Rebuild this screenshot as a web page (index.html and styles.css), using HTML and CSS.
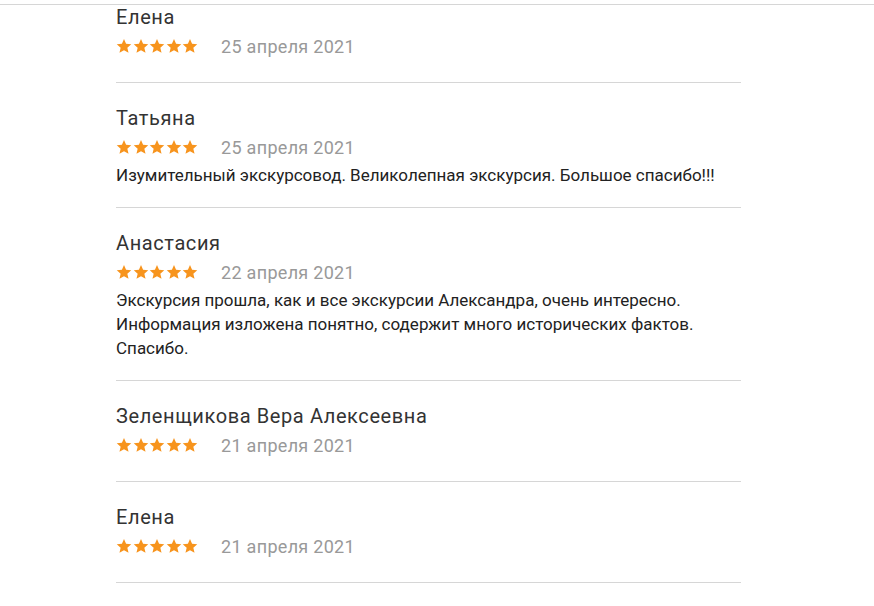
FILE: index.html
```html
<!DOCTYPE html>
<html lang="ru">
<head>
    <meta charset="UTF-8">
    <meta name="viewport" content="width=device-width, initial-scale=1.0">
    <title>Отзывы</title>
    <link rel="stylesheet" href="styles.css">
</head>
<body>

    <div class="top-line"></div>

    <div class="reviews">
        <div class="review">
            <div class="review-name">Елена</div>
            <div class="review-meta">
                <span class="stars">
                    <svg viewBox="0 0 24 24"><path d="M12 1.5l3.1 7.2 7.8.7-5.9 5.2 1.8 7.7L12 18.2l-6.8 4.1 1.8-7.7-5.9-5.2 7.8-.7z"/></svg>
                    <svg viewBox="0 0 24 24"><path d="M12 1.5l3.1 7.2 7.8.7-5.9 5.2 1.8 7.7L12 18.2l-6.8 4.1 1.8-7.7-5.9-5.2 7.8-.7z"/></svg>
                    <svg viewBox="0 0 24 24"><path d="M12 1.5l3.1 7.2 7.8.7-5.9 5.2 1.8 7.7L12 18.2l-6.8 4.1 1.8-7.7-5.9-5.2 7.8-.7z"/></svg>
                    <svg viewBox="0 0 24 24"><path d="M12 1.5l3.1 7.2 7.8.7-5.9 5.2 1.8 7.7L12 18.2l-6.8 4.1 1.8-7.7-5.9-5.2 7.8-.7z"/></svg>
                    <svg viewBox="0 0 24 24"><path d="M12 1.5l3.1 7.2 7.8.7-5.9 5.2 1.8 7.7L12 18.2l-6.8 4.1 1.8-7.7-5.9-5.2 7.8-.7z"/></svg>
                </span>
                <span class="review-date">25 апреля 2021</span>
            </div>
        </div>

        <div class="review">
            <div class="review-name">Татьяна</div>
            <div class="review-meta">
                <span class="stars">
                    <svg viewBox="0 0 24 24"><path d="M12 1.5l3.1 7.2 7.8.7-5.9 5.2 1.8 7.7L12 18.2l-6.8 4.1 1.8-7.7-5.9-5.2 7.8-.7z"/></svg>
                    <svg viewBox="0 0 24 24"><path d="M12 1.5l3.1 7.2 7.8.7-5.9 5.2 1.8 7.7L12 18.2l-6.8 4.1 1.8-7.7-5.9-5.2 7.8-.7z"/></svg>
                    <svg viewBox="0 0 24 24"><path d="M12 1.5l3.1 7.2 7.8.7-5.9 5.2 1.8 7.7L12 18.2l-6.8 4.1 1.8-7.7-5.9-5.2 7.8-.7z"/></svg>
                    <svg viewBox="0 0 24 24"><path d="M12 1.5l3.1 7.2 7.8.7-5.9 5.2 1.8 7.7L12 18.2l-6.8 4.1 1.8-7.7-5.9-5.2 7.8-.7z"/></svg>
                    <svg viewBox="0 0 24 24"><path d="M12 1.5l3.1 7.2 7.8.7-5.9 5.2 1.8 7.7L12 18.2l-6.8 4.1 1.8-7.7-5.9-5.2 7.8-.7z"/></svg>
                </span>
                <span class="review-date">25 апреля 2021</span>
            </div>
            <p class="review-text">Изумительный экскурсовод. Великолепная экскурсия. Большое спасибо!!!</p>
        </div>

        <div class="review">
            <div class="review-name">Анастасия</div>
            <div class="review-meta">
                <span class="stars">
                    <svg viewBox="0 0 24 24"><path d="M12 1.5l3.1 7.2 7.8.7-5.9 5.2 1.8 7.7L12 18.2l-6.8 4.1 1.8-7.7-5.9-5.2 7.8-.7z"/></svg>
                    <svg viewBox="0 0 24 24"><path d="M12 1.5l3.1 7.2 7.8.7-5.9 5.2 1.8 7.7L12 18.2l-6.8 4.1 1.8-7.7-5.9-5.2 7.8-.7z"/></svg>
                    <svg viewBox="0 0 24 24"><path d="M12 1.5l3.1 7.2 7.8.7-5.9 5.2 1.8 7.7L12 18.2l-6.8 4.1 1.8-7.7-5.9-5.2 7.8-.7z"/></svg>
                    <svg viewBox="0 0 24 24"><path d="M12 1.5l3.1 7.2 7.8.7-5.9 5.2 1.8 7.7L12 18.2l-6.8 4.1 1.8-7.7-5.9-5.2 7.8-.7z"/></svg>
                    <svg viewBox="0 0 24 24"><path d="M12 1.5l3.1 7.2 7.8.7-5.9 5.2 1.8 7.7L12 18.2l-6.8 4.1 1.8-7.7-5.9-5.2 7.8-.7z"/></svg>
                </span>
                <span class="review-date">22 апреля 2021</span>
            </div>
            <p class="review-text">Экскурсия прошла, как и все экскурсии Александра, очень интересно.<br>Информация изложена понятно, содержит много исторических фактов.<br>Спасибо.</p>
        </div>

        <div class="review">
            <div class="review-name">Зеленщикова Вера Алексеевна</div>
            <div class="review-meta">
                <span class="stars">
                    <svg viewBox="0 0 24 24"><path d="M12 1.5l3.1 7.2 7.8.7-5.9 5.2 1.8 7.7L12 18.2l-6.8 4.1 1.8-7.7-5.9-5.2 7.8-.7z"/></svg>
                    <svg viewBox="0 0 24 24"><path d="M12 1.5l3.1 7.2 7.8.7-5.9 5.2 1.8 7.7L12 18.2l-6.8 4.1 1.8-7.7-5.9-5.2 7.8-.7z"/></svg>
                    <svg viewBox="0 0 24 24"><path d="M12 1.5l3.1 7.2 7.8.7-5.9 5.2 1.8 7.7L12 18.2l-6.8 4.1 1.8-7.7-5.9-5.2 7.8-.7z"/></svg>
                    <svg viewBox="0 0 24 24"><path d="M12 1.5l3.1 7.2 7.8.7-5.9 5.2 1.8 7.7L12 18.2l-6.8 4.1 1.8-7.7-5.9-5.2 7.8-.7z"/></svg>
                    <svg viewBox="0 0 24 24"><path d="M12 1.5l3.1 7.2 7.8.7-5.9 5.2 1.8 7.7L12 18.2l-6.8 4.1 1.8-7.7-5.9-5.2 7.8-.7z"/></svg>
                </span>
                <span class="review-date">21 апреля 2021</span>
            </div>
        </div>

        <div class="review">
            <div class="review-name">Елена</div>
            <div class="review-meta">
                <span class="stars">
                    <svg viewBox="0 0 24 24"><path d="M12 1.5l3.1 7.2 7.8.7-5.9 5.2 1.8 7.7L12 18.2l-6.8 4.1 1.8-7.7-5.9-5.2 7.8-.7z"/></svg>
                    <svg viewBox="0 0 24 24"><path d="M12 1.5l3.1 7.2 7.8.7-5.9 5.2 1.8 7.7L12 18.2l-6.8 4.1 1.8-7.7-5.9-5.2 7.8-.7z"/></svg>
                    <svg viewBox="0 0 24 24"><path d="M12 1.5l3.1 7.2 7.8.7-5.9 5.2 1.8 7.7L12 18.2l-6.8 4.1 1.8-7.7-5.9-5.2 7.8-.7z"/></svg>
                    <svg viewBox="0 0 24 24"><path d="M12 1.5l3.1 7.2 7.8.7-5.9 5.2 1.8 7.7L12 18.2l-6.8 4.1 1.8-7.7-5.9-5.2 7.8-.7z"/></svg>
                    <svg viewBox="0 0 24 24"><path d="M12 1.5l3.1 7.2 7.8.7-5.9 5.2 1.8 7.7L12 18.2l-6.8 4.1 1.8-7.7-5.9-5.2 7.8-.7z"/></svg>
                </span>
                <span class="review-date">21 апреля 2021</span>
            </div>
        </div>
    </div>

</body>
</html>
```

FILE: styles.css
```css
body {
    margin: 0;
    font-family: Roboto, "Liberation Sans", sans-serif;
    background: #fff;
    color: #222;
}
.top-line {
    height: 4px;
    border-bottom: 1px solid #d6d6d6;
}
.reviews {
    width: 625px;
    margin-left: 116px;
}
.review {
    padding: 23px 0 20px;
    border-bottom: 1px solid #d6d6d6;
}
.review:first-child {
    padding-top: 0;
}
.review-name {
    font-size: 20px;
    line-height: 24px;
    color: #333;
    letter-spacing: 0.6px;
}
.review-meta {
    display: flex;
    align-items: center;
    gap: 23px;
    height: 24px;
    margin-top: 5px;
    margin-bottom: 4px;
}
.stars {
    display: flex;
    gap: 0.5px;
}
.stars svg {
    width: 16px;
    height: 16px;
    fill: #f7941d;
}
.review-date {
    font-size: 18px;
    letter-spacing: 0.3px;
    color: #999;
}
.review-text {
    margin: 1px 0 0;
    font-size: 17px;
    line-height: 24px;
    color: #222;
}
```
